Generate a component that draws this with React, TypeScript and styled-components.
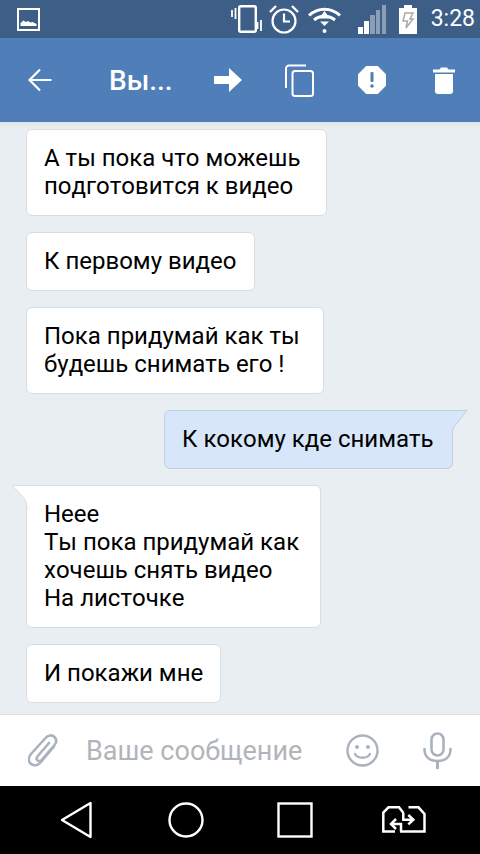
import React from 'react';
import styled, { createGlobalStyle } from 'styled-components';

const GlobalStyle = createGlobalStyle`
  html, body {
    margin: 0;
    padding: 0;
    background: #e9eef3;
  }
  * {
    box-sizing: border-box;
  }
`;

interface Msg {
  lines: string[];
  mine?: boolean;
  tail?: boolean;
  width: number;
}

const messages: Msg[] = [
  { lines: ['А ты пока что можешь', 'подготовится к видео'], width: 301 },
  { lines: ['К первому видео'], width: 229 },
  { lines: ['Пока придумай как ты', 'будешь снимать его !'], width: 298 },
  { lines: ['К кокому кде снимать'], mine: true, tail: true, width: 289 },
  { lines: ['Неее', 'Ты пока придумай как', 'хочешь снять видео', 'На листочке'], tail: true, width: 295 },
  { lines: ['И покажи мне'], width: 195 },
];

const App = () => (
  <Screen>
    <GlobalStyle />
    <StatusBar>
      <Glyph width={23} height={23} viewBox="0 0 23 23">
        <rect x="1" y="1" width="21" height="21" fill="none" stroke="#fff" strokeWidth="2" />
        <path d="M3.500 18v-3l3-2.500 2.500 1.500 2-1 2.500 1.500 2-.5 4 2v2z" fill="#fff" />
      </Glyph>
      <StatusRight>
        <Glyph width={31} height={28} viewBox="0 0 31 28">
          <path d="M1 5v7M4.500 3v11M26.500 17v7M30 15v11" stroke="#fff" strokeWidth="1.800" />
          <rect x="8.200" y="1.200" width="16.600" height="25.600" rx="1.500" fill="none" stroke="#fff" strokeWidth="2.400" />
        </Glyph>
        <Glyph $gap={7} width={30} height={29} viewBox="0 0 30 29">
          <circle cx="15" cy="16" r="11.500" fill="none" stroke="#fff" strokeWidth="2.200" />
          <path d="M15 8.500v8h6" fill="none" stroke="#fff" strokeWidth="2.200" />
          <path d="M1 7l6-6M29 7l-6-6" stroke="#fff" strokeWidth="2.400" />
        </Glyph>
        <Glyph $gap={9} width={33} height={27} viewBox="0 0 33 27">
          <path d="M1 9.500C10 1 23 1 32 9.500" fill="none" stroke="#fff" strokeWidth="3" />
          <path d="M6 14c6-5 15-5 21 0" fill="none" stroke="#fff" strokeWidth="3" />
          <path d="M16.500 5l5.500 7.500H11z" fill="#fff" />
          <path d="M12 15.500h9L16.500 20z" fill="#fff" />
          <circle cx="16.500" cy="25" r="2" fill="#fff" />
        </Glyph>
        <Glyph $gap={17} width={28} height={29} viewBox="0 0 28 29">
          <rect x="0" y="22" width="5" height="7" fill="#fff" />
          <rect x="6" y="16" width="5" height="13" fill="#fff" />
          <rect x="12" y="10" width="5" height="19" fill="#fff" opacity="0.4" />
          <rect x="18" y="5" width="4" height="24" fill="#fff" opacity="0.4" />
          <rect x="24" y="0" width="4" height="29" fill="#fff" opacity="0.4" />
        </Glyph>
        <Glyph $gap={13} width={18} height={29} viewBox="0 0 18 29">
          <path d="M5 0h8v3h5v26H0V3h5z" fill="#fff" />
          <path d="M6 8h8l-3 6h3l-7 9 1.500-7H4z" fill="none" stroke="#aaa" strokeWidth="1.500" />
        </Glyph>
        <Clock>3:28</Clock>
      </StatusRight>
    </StatusBar>

    <Header>
      <Glyph width={24} height={24} viewBox="0 0 24 24">
        <path d="M1.500 12h22M12 1.500L1.500 12 12 22.500" fill="none" stroke="#fff" strokeWidth="2.200" />
      </Glyph>
      <Title>Вы...</Title>
      <Glyph $gap={43} width={28} height={24} viewBox="0 0 28 24">
        <path d="M0 8h15V0l13 12-13 12v-8H0z" fill="#fff" />
      </Glyph>
      <Glyph $gap={43} width={29} height={33} viewBox="0 0 29 33">
        <path d="M21 1.500H4a3 3 0 0 0-3 3V24" fill="none" stroke="#fff" strokeWidth="2" />
        <rect x="7.500" y="7" width="20.500" height="25" rx="2.500" fill="none" stroke="#fff" strokeWidth="2" />
      </Glyph>
      <Glyph $gap={44} width={28} height={28} viewBox="0 0 28 28">
        <path d="M8.200 0h11.600L28 8.200v11.600L19.800 28H8.200L0 19.800V8.200z" fill="#fff" />
        <rect x="12.500" y="6" width="3" height="10" rx="1" fill="#4f7eb8" />
        <circle cx="14" cy="20" r="1.800" fill="#4f7eb8" />
      </Glyph>
      <Glyph $gap={47} width={22} height={28} viewBox="0 0 22 28">
        <path d="M0 3.500h6.500L8 1.500h6l1.500 2H22v3H0z" fill="#fff" />
        <path d="M2 8h18v17a3 3 0 0 1-3 3H5a3 3 0 0 1-3-3z" fill="#fff" />
      </Glyph>
    </Header>

    <Chat>
      {messages.map((m) =>
        <Bubble key={m.lines[0]} $mine={m.mine} $width={m.width} $tail={m.tail}>
          {m.tail && m.mine && (
            <Tail $mine width={16} height={20} viewBox="0 0 16 20">
              <path d="M0 .5H15L2 17c-.8 1-1 2-1 3H0z" fill="#d7e6f8" />
              <path d="M0 .5H15L2 17c-.8 1-1 2-1 3" fill="none" stroke="#bccfe6" />
            </Tail>
          )}
          {m.tail && !m.mine && (
            <Tail width={16} height={24} viewBox="0 0 16 24">
              <path d="M16 .5H.5L11 12c2 2.200 3.500 5 4 10v2h1z" fill="#fff" />
              <path d="M16 .5H.5L11 12c2 2.200 3.500 5 4 10v2" fill="none" stroke="#d8dde3" />
            </Tail>
          )}
          {m.lines.map((line) => (
            <Line key={line}>{line}</Line>
          ))}
        </Bubble>
      )}
    </Chat>

    <InputBar>
      <Glyph width={30} height={34} viewBox="0 0 30 34">
        <path
          d="M26 12.500L12.500 28.500c-3 3.500-7.500 3.500-10 1s-2-6.500.500-9.500L17.500 4c2.500-3 6.500-3.500 9-1s2 5.500 0 8L14 25.500c-1.500 1.800-3.500 1.800-4.500.8s-1-2.800.3-4.300L21 9"
          fill="none"
          stroke="#a9b2bd"
          strokeWidth="2.600"
          strokeLinecap="round"
        />
      </Glyph>
      <Placeholder>Ваше сообщение</Placeholder>
      <Glyph $gap={44} width={33} height={33} viewBox="0 0 33 33">
        <circle cx="16.500" cy="16.500" r="15" fill="none" stroke="#a9b2bd" strokeWidth="2.400" />
        <circle cx="11" cy="13" r="2" fill="#a9b2bd" />
        <circle cx="22" cy="13" r="2" fill="#a9b2bd" />
        <path d="M9 20c3 5 12 5 15 0" fill="none" stroke="#a9b2bd" strokeWidth="2.400" strokeLinecap="round" />
      </Glyph>
      <Glyph $gap={44} width={29} height={37} viewBox="0 0 29 37">
        <rect x="8.500" y="1.500" width="12" height="22" rx="6" fill="none" stroke="#a9b2bd" strokeWidth="2.600" />
        <path d="M1.500 17c0 8 5.500 12 13 12s13-4 13-12" fill="none" stroke="#a9b2bd" strokeWidth="2.600" strokeLinecap="round" />
        <path d="M14.500 29v8" stroke="#a9b2bd" strokeWidth="3" />
      </Glyph>
    </InputBar>

    <NavBar>
      <Glyph width={32} height={38} viewBox="0 0 32 38">
        <path d="M30.500 2L2 19l28.500 17z" fill="none" stroke="#fff" strokeWidth="2.400" strokeLinejoin="round" />
      </Glyph>
      <Glyph $gap={76} width={36} height={36} viewBox="0 0 36 36">
        <circle cx="18" cy="18" r="16.500" fill="none" stroke="#fff" strokeWidth="2.400" />
      </Glyph>
      <Glyph $gap={73} width={36} height={36} viewBox="0 0 36 36">
        <rect x="1.500" y="1.500" width="33" height="33" fill="none" stroke="#fff" strokeWidth="2.400" />
      </Glyph>
      <Glyph $gap={69} width={44} height={28} viewBox="0 0 44 28">
        <path
          d="M13 25.500H1.300V6.500L6.500 1.300H17L21.500 7M26.500 1.300h10l6 6.700v17.500H18"
          fill="none"
          stroke="#fff"
          strokeWidth="2.500"
        />
        <path
          d="M21.300 7v6.700h10M26.300 9l5 4.700-5 4.700M19 25.500V18H9.700M14 13l-5 5 5 5"
          fill="none"
          stroke="#fff"
          strokeWidth="2.500"
        />
      </Glyph>
    </NavBar>
  </Screen>
);

const Screen = styled.div`
  display: flex;
  flex-direction: column;
  width: 480px;
  height: 854px;
  overflow: hidden;
  font-family: Roboto, 'Noto Sans', sans-serif;
`;

const StatusBar = styled.div`
  display: flex;
  align-items: center;
  justify-content: space-between;
  flex: 0 0 38px;
  padding: 0 5px 0 17px;
  background: #3d5f87;
`;

const StatusRight = styled.div`
  display: flex;
  align-items: center;
`;

const Glyph = styled.svg<{ $gap?: number }>`
  display: block;
  flex: none;
  margin-left: ${(p) => p.$gap ?? 0}px;
`;

const Clock = styled.span`
  margin-left: 14px;
  color: #fff;
  font-size: 23px;
  line-height: 28px;
`;

const Header = styled.div`
  display: flex;
  align-items: center;
  flex: 0 0 84px;
  padding-left: 28px;
  background: #4f7eb8;
`;

const Title = styled.span`
  width: 62px;
  margin-left: 57px;
  color: #fff;
  font-size: 28px;
  font-weight: 500;
  white-space: nowrap;
`;

const Chat = styled.div`
  display: flex;
  flex-direction: column;
  flex: 1;
  gap: 16px;
  padding: 7px 27px 0 26px;
  background: linear-gradient(#dfe4ea, #e9eef3 6px);
`;

const Bubble = styled.div<{ $mine?: boolean; $width: number; $tail?: boolean }>`
  position: relative;
  flex: none;
  align-self: ${(p) => (p.$mine ? 'flex-end' : 'flex-start')};
  width: ${(p) => p.$width}px;
  padding: 14px 17px 15px;
  border: 1px solid ${(p) => (p.$mine ? '#bccfe6' : '#d8dde3')};
  border-radius: ${(p) => (p.$tail ? (p.$mine ? '6px 0 6px 6px' : '0 6px 6px 6px') : '6px')};
  background: ${(p) => (p.$mine ? '#d7e6f8' : '#fff')};
  color: #000;
  font-size: 24px;
  line-height: 28px;
  font-kerning: none;
`;

const Line = styled.div`
  white-space: nowrap;
`;

const Tail = styled.svg<{ $mine?: boolean }>`
  position: absolute;
  top: -1px;
  ${(p) => (p.$mine ? 'right: -16px;' : 'left: -15px;')}
`;

const InputBar = styled.div`
  display: flex;
  align-items: center;
  flex: 0 0 72px;
  padding-left: 28px;
  border-top: 1px solid #dde2e8;
  background: #fff;
`;

const Placeholder = styled.span`
  width: 215px;
  margin-left: 28px;
  margin-right: 1px;
  color: #b1b5bb;
  font-size: 27px;
  white-space: nowrap;
`;

const NavBar = styled.div`
  display: flex;
  align-items: center;
  flex: 0 0 68px;
  padding-left: 60px;
  background: #000;
`;

export default App;
